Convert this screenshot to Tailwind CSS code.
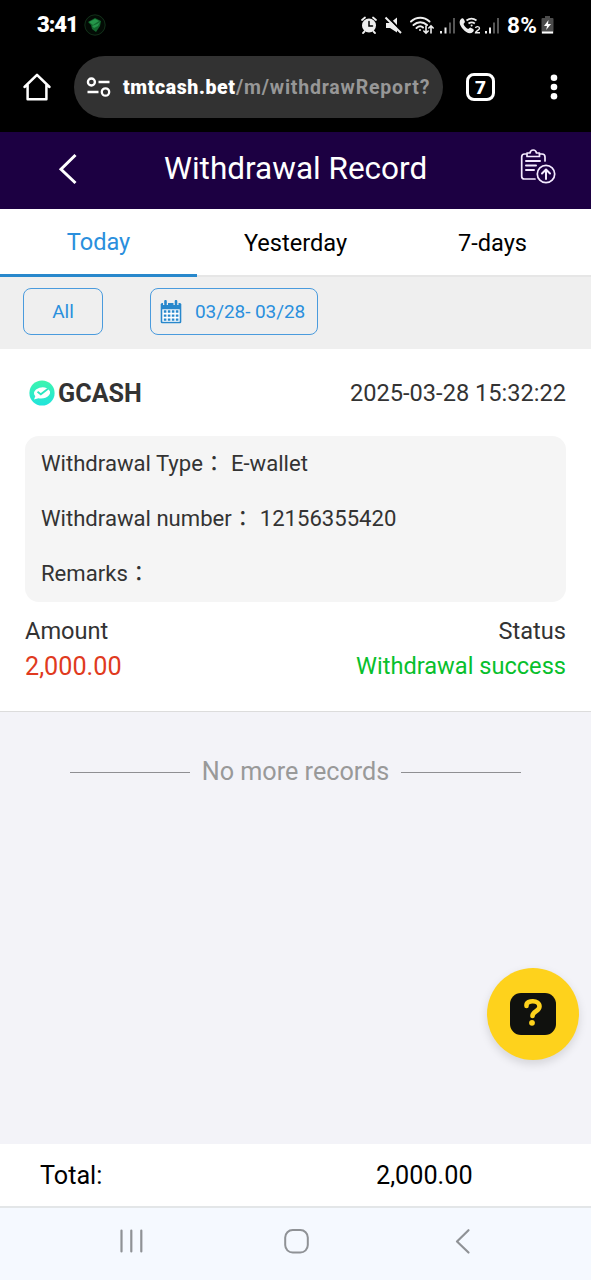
<!DOCTYPE html>
<html lang="en">
<head>
<meta charset="utf-8">
<title>Withdrawal Record</title>
<script src="https://cdn.jsdelivr.net/npm/@tailwindcss/browser@4"></script>
</head>
<body class="w-[591px] h-[1280px] overflow-hidden bg-[#f3f3f8] font-['Roboto','Noto_Sans_CJK_TC',sans-serif] text-[#333]">
<div class="flex flex-col h-full relative">
  <!-- Status bar -->
  <div class="h-[50px] shrink-0 bg-black text-white flex items-center pl-[37px]">
    <span class="w-[41px] text-[22px] leading-[50px] font-black tracking-[-1px] whitespace-nowrap">3:41</span>
    <svg class="ml-[6px]" width="22" height="22" viewBox="0 0 22 22"><circle cx="11" cy="11" r="10.2" fill="#030b05" stroke="#173b20" stroke-width=".8"/><path d="M4 8l7-4 6 3-1 5-4 6-4-3-1-4z" fill="#12652d"/><path d="M5 8l6-3 4 2-6 4zM8 12l5-2 3-2-2 4-4 2z" fill="#25964a"/></svg>
    <svg class="ml-[254px] shrink-0" width="142" height="24" viewBox="0 0 142 24" fill="none" stroke="#eee">
      <g stroke-width="1.8" stroke-linecap="round"><path d="M2 7l3-2.500M13 4.500L16 7M4.500 18.500L3 20M13.500 18.500L15 20"/><circle cx="9" cy="12.500" r="7" fill="#eee" stroke="none"/><path d="M9 8.500V13h3.500" stroke="#000" stroke-width="1.500"/></g>
      <path d="M26 10h4l7-5.500v15L30 15h-4z" fill="#eee" stroke="none"/><path d="M27 3l16 17" stroke="#000" stroke-width="2"/><path d="M25.500 4.500L41 20" stroke-width="2"/>
      <g stroke-width="2" stroke-linecap="round"><path d="M51 8.500c5.500-5 13-5 18.500 0M53.500 12c4-3.700 9.500-3.700 13.500 0M56.500 15c2.300-2 5-2 6.500-.5"/><circle cx="60" cy="17" r="1" fill="#eee" stroke="none"/><path d="M66 13v7M63.800 18l2.200 2.200 2.200-2.200M71 20v-7M68.800 15l2.200-2.200L73.200 15" stroke-width="1.600"/></g>
      <g stroke-width="2"><path d="M81 18v2.500M85.500 14.500v6"/><path d="M90 9.500v11M94 5v15.500" stroke="#555"/></g>
      <path d="M101 6c1-1 2-1 3 .5l1 2.500-1.500 2c1 2.500 2.500 4 4.700 5l2-1.500 3 1.500c1 1 .7 2-.3 3-3 2.800-7 .5-10-3s-4.500-7.500-1.900-10z" fill="#eee" stroke="none"/>
      <path d="M106.500 7.500c3-2.300 7-2.300 10 0M108.500 10.500c2-1.500 4.500-1.500 6.300 0" stroke-width="1.700"/><circle cx="111.600" cy="12.500" r="1" fill="#eee" stroke="none"/>
      <path d="M115.500 15c.5-2 4-1.800 4 .2 0 1.800-4 3-4 4.600h4.500" stroke-width="1.400"/>
      <g stroke-width="2"><path d="M126 18v2.500M130 14.500v6"/><path d="M134 9.500v11M138 5v15.500" stroke="#555"/></g>
    </svg>
    <span class="ml-[5px] w-[33px] text-[22.500px] leading-[48px] font-bold tracking-[0.3px] whitespace-nowrap">8%</span>
    <svg class="ml-[1px] shrink-0" width="13" height="18" viewBox="0 0 13 18"><path d="M4 0h5v2h2.500a1 1 0 011 1v14.500H.5V3a1 1 0 011-1H4z" fill="#4c4c4c"/><path d="M7.500 4L3 10h3l-.8 4L10 8H7z" fill="#fff"/><path d="M1 16.500h11" stroke="#fff" stroke-width="2"/></svg>
  </div>
  <!-- Browser toolbar -->
  <div class="h-[82px] shrink-0 bg-black flex items-start pt-[6px]">
    <svg class="ml-[22px] mt-[16px]" width="30" height="30" viewBox="0 0 30 30" fill="none" stroke="#fff" stroke-width="2.500" stroke-linejoin="round" stroke-linecap="round"><path d="M2.500 15L15 2.800 27.500 15M5.600 13v14.200h18.800V13"/></svg>
    <div class="ml-[22px] w-[369px] h-[62px] rounded-full bg-[#323232] flex items-center pl-[12px]">
      <svg width="26" height="22" viewBox="0 0 26 22" fill="none" stroke="#fff" stroke-width="2.300"><circle cx="5.400" cy="6" r="3.500"/><path d="M12.500 6h11M1.500 16h11"/><circle cx="19.500" cy="16" r="3.700"/></svg>
      <div class="ml-[11px] mt-[2px] flex text-[19.500px] font-bold whitespace-nowrap leading-[24px]"><span class="w-[113px] font-black text-white tracking-[0.6px]">tmtcash.bet</span><span class="text-[#979797] tracking-[0.8px]">/m/withdrawReport?</span></div>
    </div>
    <div class="ml-[23px] mt-[17px] w-[29px] h-[28px] rounded-[8px] border-[3px] border-white text-white font-black text-[19px] leading-[23px] text-center">7</div>
    <svg class="ml-[54px] mt-[16px]" width="10" height="30" viewBox="0 0 10 30" fill="#fff"><circle cx="5" cy="5.800" r="3.300"/><circle cx="5" cy="15" r="3.300"/><circle cx="5" cy="24.200" r="3.300"/></svg>
  </div>
  <!-- Page header -->
  <div class="h-[77px] shrink-0 bg-[#1c0042] text-white flex items-center">
    <svg class="ml-[56px] -mt-[5px]" width="24" height="34" viewBox="0 0 24 34" fill="none" stroke="#fff" stroke-width="3"><path d="M19.500 4L5 18.300 19.500 32"/></svg>
    <h1 class="ml-[84px] -mt-[4px] w-[270px] text-[31.500px] leading-[40px] whitespace-nowrap">Withdrawal Record</h1>
    <svg class="ml-[86px] -mt-[9px]" width="36" height="36" viewBox="0 0 36 36" fill="none" stroke="#f4eaff" stroke-width="1.700" stroke-linecap="round" stroke-linejoin="round"><path d="M6 6H4.500Q1.700 6 1.700 9v19.500q0 2.500 2.800 2.500H15M19.500 6H22q3 0 3 3v4"/><path d="M7 8.500V5h3q.5-3 3.200-3t3.300 3h3v3.500z"/><path d="M6 13h14M6 17.500h10M6 22h8" stroke-width="2"/><circle cx="26" cy="26" r="8.700"/><path d="M26 31v-9M22 25.500l4-4 4 4" stroke-width="2"/></svg>
  </div>
  <!-- Period tabs -->
  <div class="h-[68px] shrink-0 bg-white grid grid-cols-3 text-center text-[23.600px] text-black leading-[68px] border-b-2 border-[#e6e6e6]">
    <div class="h-[68px] leading-[67px] text-[#2a8fdd] border-b-[3px] border-[#2888cc]">Today</div><div>Yesterday</div><div>7-days</div>
  </div>
  <!-- Filters -->
  <div class="h-[72px] shrink-0 bg-[#efefef] flex pt-[11px] pl-[23px] text-[19px] text-[#2a8fdd]">
    <div class="w-[80px] h-[47px] border-[1.500px] border-[#4a9bdd] rounded-[8px] text-center leading-[46px]">All</div>
    <div class="ml-[47px] w-[168px] h-[47px] border-[1.500px] border-[#4a9bdd] rounded-[8px] flex items-center pl-[9px]">
      <svg width="22" height="24" viewBox="0 0 22 24"><rect x=".7" y="3" width="20.600" height="20.300" rx="1.500" fill="#2888cc"/><path d="M2.300 9.300h17.400v12.500H2.300z" fill="#fff"/><path d="M5.500 0v5M16 0v5" stroke="#efefef" stroke-width="5"/><path d="M5.500 1.200v3M16 1.200v3" stroke="#2888cc" stroke-width="2.600" stroke-linecap="round"/><path d="M3.800 11.500h15M3.800 15.600h15M3.800 19.600h15" stroke="#2888cc" stroke-width="2.400" stroke-dasharray="2.600 1.400"/></svg>
      <span class="ml-[13px] leading-[44px] whitespace-nowrap tracking-[-0.08px]">03/28- 03/28</span>
    </div>
  </div>
  <!-- Record -->
  <div class="h-[363px] shrink-0 bg-white border-b border-[#dcdcdc] px-[25px]">
    <div class="h-[87px] flex items-center">
      <svg class="ml-[4px]" width="26" height="26" viewBox="0 0 26 26"><defs><linearGradient id="g" x2="0" y2="1"><stop stop-color="#3df5ad"/><stop offset="1" stop-color="#20e4dc"/></linearGradient></defs><circle cx="13" cy="13" r="12.600" fill="url(#g)"/><path d="M7 9.500q6-4 11-1.200 5 3.200 2 7-4 4.200-10.500 3L5 19.500l1.300-3.200q-3-3.500.7-6.800z" fill="#fff"/><path d="M8.500 11.800l3.300 2.500L19 8.800" fill="none" stroke="#2be6bf" stroke-width="1.800"/></svg>
      <span class="ml-[3px] mt-[2px] text-[25.200px] font-bold">GCASH</span>
      <span class="ml-auto mt-[2px] text-[23.600px]">2025-03-28 15:32:22</span>
    </div>
    <div class="h-[166px] rounded-[14px] bg-[#f5f5f5] px-[16px] text-[22.100px]">
      <div class="h-[55px] leading-[54px] flex whitespace-pre"><span>Withdrawal Type</span><span class="w-[28px]">：</span><span>E-wallet</span></div>
      <div class="h-[55px] leading-[54px] flex whitespace-pre"><span>Withdrawal number</span><span class="w-[28px]">：</span><span>12156355420</span></div>
      <div class="h-[55px] leading-[54px] flex whitespace-pre"><span>Remarks</span><span>：</span></div>
    </div>
    <div class="mt-[12px] flex justify-between text-[23.600px] leading-[35px]"><span>Amount</span><span>Status</span></div>
    <div class="flex justify-between text-[23.600px] leading-[35px]"><span class="text-[25.200px] text-[#e03a20]">2,000.00</span><span class="text-[#08c02c]">Withdrawal success</span></div>
  </div>
  <div class="mt-[43px] flex items-center justify-center text-[25.200px] leading-[34px] text-[#999]">
    <div class="w-[120px] h-px bg-[#8f8f93]"></div><span class="mx-[12px] whitespace-nowrap">No more records</span><div class="w-[120px] h-px bg-[#8f8f93]"></div>
  </div>
  <!-- Total -->
  <div class="mt-auto h-[64px] shrink-0 bg-white border-b-2 border-[#e3e6e8] text-black text-[25.200px] leading-[64px] flex pl-[40px]"><span class="w-[336px]">Total:</span><span>2,000.00</span></div>
  <!-- System navigation -->
  <div class="h-[72px] shrink-0 bg-[#f5f9ff] flex items-center">
    <svg class="ml-[119px] -mt-[6px]" width="26" height="26" viewBox="0 0 26 26" stroke="#8f9296" stroke-width="2.200" stroke-linecap="round"><path d="M2.500 2.500v21M12.300 2.500v21M22.300 2.500v21"/></svg>
    <svg class="ml-[138px] -mt-[6px]" width="26" height="26" viewBox="0 0 26 26"><rect x="2.200" y="2" width="22.600" height="22.600" rx="7.500" fill="none" stroke="#8f9296" stroke-width="2"/></svg>
    <svg class="ml-[144px] -mt-[6px]" width="20" height="28" viewBox="0 0 20 28" fill="none" stroke="#8f9296" stroke-width="2.200" stroke-linecap="round" stroke-linejoin="round"><path d="M15.500 3.200L4 14.500 15.500 25.500"/></svg>
  </div>
  <!-- Floating help button -->
  <div class="absolute left-[487px] top-[968px] w-[92px] h-[92px] rounded-full bg-[#fed21c] shadow-[0_4px_10px_rgba(0,0,0,0.13)] flex items-center justify-center">
    <svg width="46" height="42" viewBox="0 0 46 42"><rect width="46" height="42" rx="11" fill="#10110e"/><path d="M16.500 13v-1c0-5 13-5.500 13 1.500 0 5-7 4.500-7 9.500" fill="none" stroke="#fed21c" stroke-width="4.600" stroke-linecap="round"/><circle cx="22" cy="29.800" r="2.900" fill="#fed21c"/></svg>
  </div>
</div>
</body>
</html>
